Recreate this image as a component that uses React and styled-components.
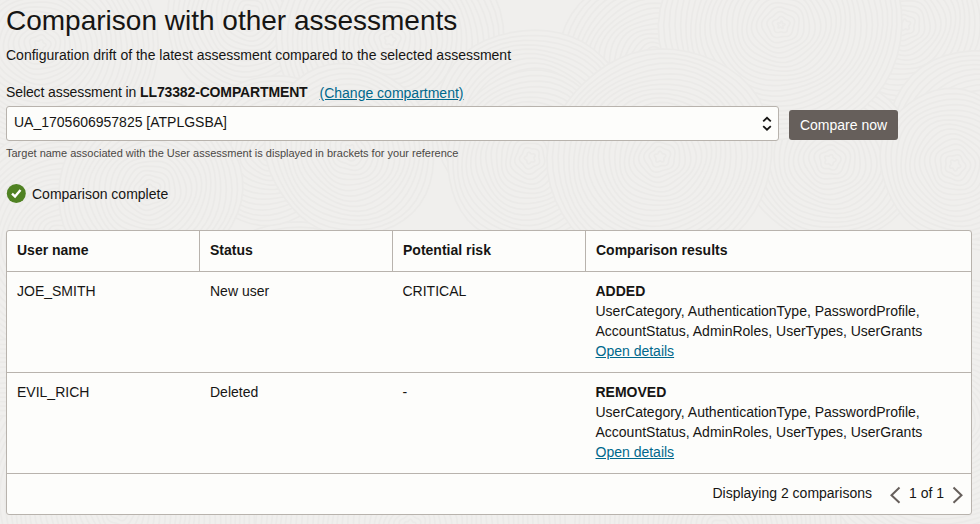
import React from 'react';
import styled, { createGlobalStyle } from 'styled-components';

const GlobalStyle = createGlobalStyle`
  * { box-sizing: border-box; }
  html, body { margin: 0; background: #f0efed; }
  body { overflow: hidden; }
`;

const Page = styled.main`
  position: relative;
  isolation: isolate;
  width: 980px;
  height: 524px;
  overflow: hidden;
  padding: 0 8px 0 6px;
  background: #f0efed;
  color: #161513;
  font-family: 'Liberation Sans', Arial, sans-serif;
  font-size: 14px;
  line-height: 20px;
`;

const Backdrop = styled.svg`
  position: absolute;
  inset: 0;
  z-index: -1;
`;

const Title = styled.h1`
  margin: 0;
  padding-top: 5px;
  font-size: 28px;
  font-weight: 400;
  line-height: 32px;
  white-space: nowrap;
`;

const Subtitle = styled.p`
  margin: 8px 0 0;
`;

const LabelRow = styled.div`
  display: flex;
  gap: 12px;
  margin-top: 17px;
  height: 24px;
`;

const LabelText = styled.span`
  letter-spacing: -0.1px;

  strong {
    letter-spacing: -0.14px;
  }
`;

const TextLink = styled.a`
  color: #00688c;
  text-decoration: underline;
`;

const LabelLink = styled(TextLink)`
  padding-top: 1px;
`;

const Controls = styled.div`
  display: flex;
  align-items: flex-start;
  gap: 10px;
`;

const Select = styled.div`
  display: flex;
  justify-content: space-between;
  width: 773px;
  height: 35px;
  padding: 5px 6px 0 7px;
  border: 1px solid #b8b3ad;
  border-radius: 3px;
  background: #fdfdfb;
`;

const SelectIcon = styled.svg`
  margin-top: 4px;
`;

const Button = styled.button`
  width: 109px;
  height: 30px;
  margin-top: 4px;
  padding: 0;
  border: 0;
  border-radius: 3px;
  background: #665f5b;
  color: #fff;
  font: inherit;
`;

const Help = styled.p`
  margin: 4px 0 0;
  color: #4b4845;
  font-size: 11px;
  line-height: 16px;
`;

const Status = styled.div`
  display: flex;
  align-items: center;
  gap: 6px;
  height: 20px;
  margin-top: 23px;
`;

const TablePanel = styled.section`
  margin-top: 26px;
  height: 285px;
  border: 1px solid #b8b3ad;
  border-radius: 3px;
  background: #fdfdfb;
`;

const Row = styled.div`
  display: grid;
  grid-template-columns: 193px 193px 193px 1fr;
  height: ${(p) => (p.$header ? 41 : 101)}px;
  border-bottom: 1px solid #b8b3ad;
`;

const HeadCell = styled.div`
  padding: 9px 10px;
  font-weight: 700;
  border-left: ${(p) => (p.$first ? '0' : '1px solid #b8b3ad')};
  margin-left: ${(p) => (p.$first ? '0' : '-1px')};
`;

const Cell = styled.div`
  padding: 9px 10px 9px ${(p) => (p.$tight ? 9.5 : 10)}px;
`;

const Line = styled.div`
  white-space: nowrap;
`;

const Footer = styled.footer`
  display: flex;
  justify-content: flex-end;
  padding: 9px 8px 0 0;
`;

const Pager = styled.div`
  display: flex;
  gap: 8px;
  margin-left: 18px;
`;

const PageIcon = styled.svg`
  margin-top: 3px;
`;

// Centre x, centre y, outer radius, phase of the wobble. Later swirls cover earlier ones.
const swirls = [
  [120, 510, 150, 0], [410, 525, 150, 2], [720, 530, 150, 5], [0, 300, 120, 1],
  [300, 330, 110, 7], [950, 420, 140, 3], [975, 20, 90, 2], [40, 45, 115, 1],
  [250, 15, 85, 4], [390, 40, 110, 1.5], [655, 62, 95, 2], [905, 25, 90, 3],
  [985, 150, 100, 0], [830, 160, 85, 1], [60, 240, 110, 4], [535, 125, 98, 1],
  [781, 25, 118, 2], [270, 150, 75, 3], [350, 150, 85, 6], [530, 158, 85, 4],
  [150, 190, 90, 2.5], [660, 157, 110, 2.5], [955, 165, 75, 6],
];

function ringPath(x, y, r, phase) {
  const points = [];
  for (let step = 0; step < 48; step += 1) {
    const angle = (step / 48) * Math.PI * 2;
    const reach = r * (1 + 0.035 * Math.sin(angle * 2 + phase))
      + 0.9 * Math.sin(angle * 5 + phase + r * 0.13);
    points.push(`${(x + Math.cos(angle) * reach).toFixed(1)},${(y + Math.sin(angle) * reach).toFixed(1)}`);
  }
  return `M${points.join('L')}Z`;
}

function Swirl({ x, y, radius, phase }) {
  const rings = [];
  for (let r = radius; r > 2; r -= 5) rings.push(r);
  return (
    <g>
      {rings.map((r, i) => (
        <path key={r} d={ringPath(x, y, r, phase)} fill={i ? 'none' : '#f0efed'} />
      ))}
    </g>
  );
}

const UpDownIcon = () => (
  <SelectIcon width="10" height="16" viewBox="0 0 10 16" fill="none" stroke="#161513" strokeWidth="1.8">
    <path d="M1.2 5.3 5 1.8 8.8 5.3M1.2 10.2 5 13.7 8.8 10.2" />
  </SelectIcon>
);

const CheckIcon = () => (
  <svg width="20" height="20" viewBox="0 0 20 20">
    <circle cx="10.3" cy="9.5" r="9.5" fill="#508223" />
    <path d="m6 9.7 3 2.8 5.5-6.6" fill="none" stroke="#fff" strokeWidth="2.4" />
  </svg>
);

const Chevron = ({ right }) => (
  <PageIcon width="11" height="18" viewBox="0 0 11 18" fill="none" stroke="#665f5b" strokeWidth="2">
    <path d={right ? 'm1.5 1.5 8 7.7-8 7.5' : 'm9.5 1.5-8 7.7 8 7.5'} />
  </PageIcon>
);

const columns = ['User name', 'Status', 'Potential risk', 'Comparison results'];
const users = [
  { name: 'JOE_SMITH', status: 'New user', risk: 'CRITICAL', result: 'ADDED' },
  { name: 'EVIL_RICH', status: 'Deleted', risk: '-', result: 'REMOVED' },
];

export default function App() {
  return (
    <Page>
      <GlobalStyle />
      <Backdrop width="980" height="524" stroke="#ebeae8" strokeWidth="1.7" aria-hidden="true">
        {swirls.map(([x, y, radius, phase]) => (
          <Swirl key={`${x}-${y}`} x={x} y={y} radius={radius} phase={phase} />
        ))}
      </Backdrop>
      <Title>Comparison with other assessments</Title>
      <Subtitle>Configuration drift of the latest assessment compared to the selected assessment</Subtitle>
      <LabelRow>
        <LabelText>Select assessment in <strong>LL73382-COMPARTMENT</strong></LabelText>
        <LabelLink>(Change compartment)</LabelLink>
      </LabelRow>
      <Controls>
        <Select><span>UA_1705606957825 [ATPLGSBA]</span><UpDownIcon /></Select>
        <Button>Compare now</Button>
      </Controls>
      <Help>Target name associated with the User assessment is displayed in brackets for your reference</Help>
      <Status><CheckIcon /><span>Comparison complete</span></Status>
      <TablePanel>
        <Row $header>
          {columns.map((c, i) => <HeadCell key={c} $first={i === 0}>{c}</HeadCell>)}
        </Row>
        {users.map((u) => (
          <Row key={u.name}>
            <Cell>{u.name}</Cell>
            <Cell>{u.status}</Cell>
            <Cell $tight>{u.risk}</Cell>
            <Cell $tight>
              <Line><strong>{u.result}</strong></Line>
              <Line>UserCategory, AuthenticationType, PasswordProfile,</Line>
              <Line>AccountStatus, AdminRoles, UserTypes, UserGrants</Line>
              <Line><TextLink>Open details</TextLink></Line>
            </Cell>
          </Row>
        ))}
        <Footer>
          <span>Displaying 2 comparisons</span>
          <Pager><Chevron /><span>1 of 1</span><Chevron right /></Pager>
        </Footer>
      </TablePanel>
    </Page>
  );
}
